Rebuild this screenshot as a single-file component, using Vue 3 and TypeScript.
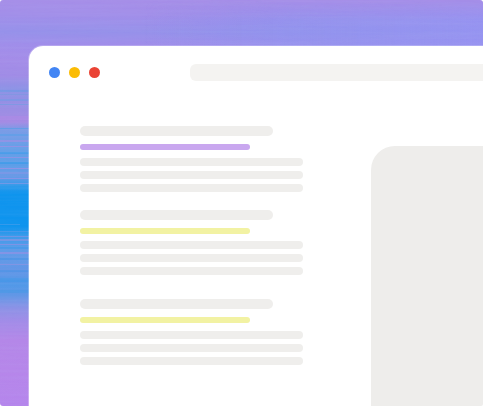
<script setup lang="ts">
interface Streak { y: number; h: number; c: string; o: number; w?: number }

const stops: [number, string][] = [
  [0, '#a68ee8'], [14, '#a28ee9'], [26, '#9a90ea'], [32, '#9691ea'], [44, '#a08eea'], [60, '#a48ce8'],
  [76, '#a08ce6'], [90, '#8b93e6'], [108, '#9a8ee4'], [122, '#a58ae4'], [130, '#7a9ce6'],
  [150, '#659fe8'], [165, '#5c9ee8'], [176, '#6a9ae6'], [186, '#2d9aea'], [194, '#0c94ee'],
  [228, '#0e94ee'], [236, '#3a9aea'], [250, '#5f9ce8'], [270, '#6396e6'], [285, '#4f98e8'],
  [296, '#6397e6'], [308, '#8c92e6'], [322, '#a38ce8'], [340, '#b487e8'], [370, '#b686ea'], [406, '#b585ec'],
]
const gradientStops = stops.map(([y, c]) => ({ offset: `${(y / 406) * 100}%`, color: c }))

const streaks: Streak[] = [
  { y: 90, h: 2, c: '#6a9ae4', o: 0.6 },
  { y: 94, h: 1, c: '#7a95e0', o: 0.7 },
  { y: 99, h: 2, c: '#6b9ce6', o: 0.5 },
  { y: 104, h: 1, c: '#5c9be0', o: 0.45 },
  { y: 116, h: 4, c: '#ad8ae6', o: 0.7 },
  { y: 128, h: 1, c: '#4f9fe8', o: 0.6 },
  { y: 134, h: 2, c: '#58a0ea', o: 0.6 },
  { y: 140, h: 2, c: '#9a90e6', o: 0.75 },
  { y: 146, h: 1, c: '#a48fe4', o: 0.65 },
  { y: 152, h: 2, c: '#3a9cea', o: 0.6 },
  { y: 157, h: 1, c: '#9b8fe6', o: 0.65 },
  { y: 162, h: 2, c: '#329aea', o: 0.55 },
  { y: 168, h: 1, c: '#a58de4', o: 0.65 },
  { y: 172, h: 2, c: '#7f96e6', o: 0.65 },
  { y: 178, h: 1, c: '#9d90e6', o: 0.65 },
  { y: 183, h: 1, c: '#8a96e6', o: 0.65 },
  { y: 224, h: 1, c: '#5aa0e8', o: 0.45, w: 20 },
  { y: 231, h: 1, c: '#6b9ce8', o: 0.5 },
  { y: 236, h: 1, c: '#8e92e4', o: 0.6 },
  { y: 239, h: 2, c: '#8b94e4', o: 0.65 },
  { y: 244, h: 1, c: '#a08ce2', o: 0.55 },
  { y: 247, h: 2, c: '#2f95e8', o: 0.45 },
  { y: 252, h: 2, c: '#9a8fe4', o: 0.6 },
  { y: 258, h: 2, c: '#3c92e6', o: 0.5 },
  { y: 264, h: 1, c: '#8e92e0', o: 0.65 },
  { y: 270, h: 2, c: '#3e92e6', o: 0.45 },
  { y: 278, h: 4, c: '#3e98e8', o: 0.55 },
  { y: 290, h: 3, c: '#3f98e6', o: 0.5 },
]

const groups = [
  { id: 1, accent: 'purple' },
  { id: 2, accent: 'yellow' },
  { id: 3, accent: 'yellow' },
]
const lines = [1, 2, 3]
const dots = ['#4285f4', '#fbbc05', '#ea4335']
</script>

<template>
  <div class="frame">
    <svg class="backdrop" width="483" height="406" viewBox="0 0 483 406" aria-hidden="true">
      <defs>
        <linearGradient id="base" x1="0" y1="0" x2="0" y2="1">
          <stop v-for="s in gradientStops" :key="s.offset" :offset="s.offset" :stop-color="s.color" />
        </linearGradient>
        <linearGradient id="sweep" x1="0" y1="0" x2="1" y2="0">
          <stop offset="0.3" stop-color="#8f95f0" stop-opacity="0" />
          <stop offset="0.6" stop-color="#8f95f0" stop-opacity="0.55" />
          <stop offset="1" stop-color="#9594f2" stop-opacity="0.8" />
        </linearGradient>
        <linearGradient id="fade" x1="0" y1="0" x2="0" y2="1">
          <stop offset="0" stop-color="#fff" stop-opacity="0" />
          <stop offset="0.45" stop-color="#fff" stop-opacity="1" />
        </linearGradient>
        <mask id="fadeMask">
          <rect width="483" height="46" fill="url(#fade)" />
        </mask>
        <filter id="grain" x="0" y="0" width="100%" height="100%">
          <feTurbulence type="fractalNoise" baseFrequency="0.006 0.3" numOctaves="2" seed="7" />
          <feColorMatrix type="matrix" values="0 0 0 0 0.55  0 0 0 0 0.6  0 0 0 0 0.95  1.6 0 0 0 -0.55" />
        </filter>
        <filter id="soft" x="0" y="-5%" width="100%" height="110%">
          <feGaussianBlur stdDeviation="0 0.45" />
        </filter>
      </defs>
      <rect width="483" height="406" fill="url(#base)" />
      <g filter="url(#soft)">
        <rect
          v-for="(s, i) in streaks"
          :key="i"
          x="0"
          :y="s.y"
          :width="s.w ?? 483"
          :height="s.h"
          :fill="s.c"
          :opacity="s.o"
        />
      </g>
      <rect width="483" height="46" fill="url(#sweep)" mask="url(#fadeMask)" />
      <rect width="483" height="406" filter="url(#grain)" opacity="0.1" />
    </svg>

    <div class="card">
      <div class="toolbar">
        <div class="dots">
          <span v-for="d in dots" :key="d" class="dot" :style="{ background: d }"></span>
        </div>
        <div class="address"></div>
      </div>

      <div class="body">
        <div class="column">
          <section v-for="g in groups" :key="g.id" class="group">
            <div class="title"></div>
            <div class="accent" :class="g.accent"></div>
            <div class="lines">
              <div v-for="l in lines" :key="l" class="line"></div>
            </div>
          </section>
        </div>
        <div class="panel"></div>
      </div>
    </div>
  </div>
</template>

<style scoped>
.frame {
  position: relative;
  width: 484px;
  height: 407px;
  overflow: hidden;
  background: #ffffff;
  padding: 45px 0 0 28px;
  box-sizing: border-box;
}
.backdrop {
  position: absolute;
  top: 0;
  left: 0;
  border-radius: 3px;
}
.card {
  position: relative;
  width: 455px;
  height: 362px;
  box-sizing: border-box;
  border-top: 1px solid rgba(255, 255, 255, 0.22);
  border-left: 1px solid rgba(255, 255, 255, 0.3);
  border-top-left-radius: 15px;
  background: #ffffff;
  background-clip: padding-box;
}
.toolbar {
  display: flex;
  align-items: center;
  padding-top: 18px;
  height: 35px;
  box-sizing: border-box;
}
.dots {
  display: flex;
  gap: 8.7px;
  width: 161px;
  padding-left: 19.5px;
  box-sizing: border-box;
}
.dot {
  width: 11.4px;
  height: 11.4px;
  border-radius: 50%;
}
.address {
  flex: 1;
  height: 17px;
  margin-right: 0.5px;
  background: #f4f3f1;
  border-radius: 6px 0 0 6px;
}
.body {
  display: flex;
  justify-content: space-between;
  align-items: flex-start;
}
.column {
  width: 223px;
  margin-left: 50.7px;
  padding-top: 45px;
}
.group + .group {
  margin-top: 18px;
}
.group:last-child {
  margin-top: 24px;
}
.title {
  width: 193px;
  height: 10px;
  border-radius: 5px;
  background: #efeeec;
}
.accent {
  width: 170px;
  height: 6px;
  margin-top: 8px;
  border-radius: 3px;
}
.purple {
  background: #c9a7ef;
}
.yellow {
  background: #f2f2a3;
}
.lines {
  display: flex;
  flex-direction: column;
  gap: 5px;
  margin-top: 8px;
}
.group:nth-child(2) .lines {
  margin-top: 7px;
}
.line {
  height: 8px;
  border-radius: 4px;
  background: #efeeec;
}
.panel {
  width: 111.7px;
  height: 260px;
  margin-top: 65px;
  margin-right: 0.3px;
  background: #eeedeb;
  border-radius: 24px 0 2px 0;
}
</style>
